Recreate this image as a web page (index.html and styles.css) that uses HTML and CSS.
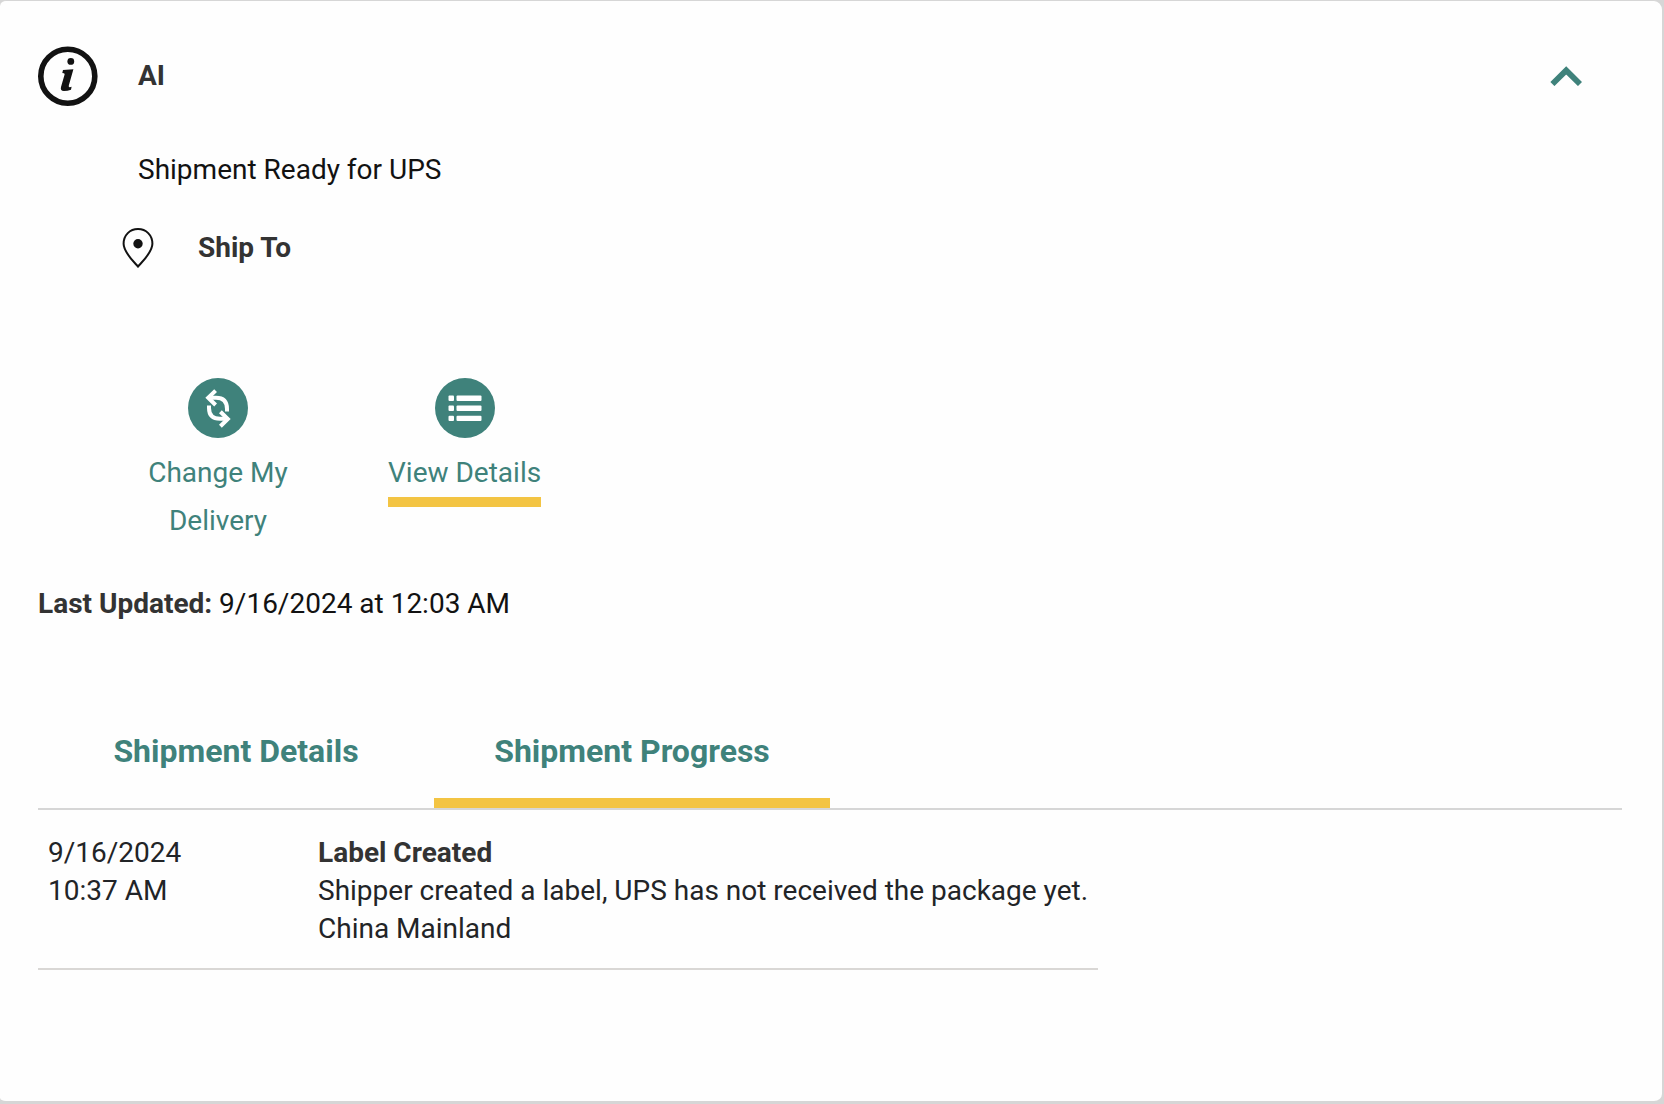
FILE: index.html
```html
<!DOCTYPE html>
<html lang="en">
<head>
    <meta charset="UTF-8">
    <meta name="viewport" content="width=device-width, initial-scale=1.0">
    <title>Shipment Tracking</title>
    <link rel="stylesheet" href="styles.css">
</head>
<body>

<main class="card">
    <header class="card-header">
        <svg class="info-icon" viewBox="0 0 60 60" aria-hidden="true">
            <circle cx="29.8" cy="30.2" r="27" fill="none" stroke="#121212" stroke-width="5.6"/>
            <circle cx="32.8" cy="15.4" r="3.4" fill="#121212"/>
            <path d="M25 24 L35.4 23.2 L30.8 39.6 Q30.4 41.4 31.8 41.2 L33.6 40.8 L33 43.8 Q29.5 45 26 45 Q22 44.8 23 41 L26.6 28.6 Q26.9 27.4 25.8 27.3 L24.3 27.1 Z" fill="#121212"/>
        </svg>
        <h1 class="card-title">AI</h1>
        <button type="button" class="collapse" aria-label="Collapse">
            <svg class="chevron" viewBox="0 0 32 20" aria-hidden="true">
                <path d="M2.4 18 L16.2 4.4 L30 18" fill="none" stroke="#3f827b" stroke-width="5.8"/>
            </svg>
        </button>
    </header>

    <p class="status">Shipment Ready for UPS</p>

    <div class="ship-to">
        <svg class="pin-icon" viewBox="0 0 32 40" aria-hidden="true">
            <path d="M16 38.6 C12 34 1.6 24.5 1.6 15.8 C1.6 7 8 1.1 16 1.1 C24 1.1 30.4 7 30.4 15.8 C30.4 24.5 20 34 16 38.6 Z" fill="none" stroke="#121212" stroke-width="2"/>
            <circle cx="16" cy="15.7" r="4.7" fill="#121212"/>
        </svg>
        <h2 class="ship-to-title">Ship To</h2>
    </div>

    <nav class="actions">
        <a class="action" href="#change">
            <svg class="action-icon" viewBox="0 0 60 60" aria-hidden="true">
                <circle cx="30" cy="30" r="30" fill="#3f827b"/>
                <g fill="none" stroke="#fff" stroke-width="4">
                    <path d="M21 19.8 L28 19.8 Q39 19.8 39 31 L39 33.5"/>
                    <path d="M27.6 12.6 L20.2 19.8 L27.6 27"/>
                    <path d="M39 40.8 L32 40.8 Q21 40.8 21 30 L21 27.5"/>
                    <path d="M32.4 33.8 L39.8 41 L32.4 48.2"/>
                </g>
            </svg>
            <span class="action-label">Change My Delivery</span>
        </a>
        <a class="action active" href="#details">
            <svg class="action-icon" viewBox="0 0 60 60" aria-hidden="true">
                <circle cx="30" cy="30" r="30" fill="#3f827b"/>
                <g fill="#fff">
                    <rect x="13.5" y="17.5" width="5.5" height="5.4" rx="1"/>
                    <rect x="21.5" y="17.5" width="25" height="5.4" rx="1"/>
                    <rect x="13.5" y="27.6" width="5.5" height="5.4" rx="1"/>
                    <rect x="21.5" y="27.6" width="25" height="5.4" rx="1"/>
                    <rect x="13.5" y="37.7" width="5.5" height="5.4" rx="1"/>
                    <rect x="21.5" y="37.7" width="25" height="5.4" rx="1"/>
                </g>
            </svg>
            <span class="action-label">View Details</span>
        </a>
    </nav>

    <p class="updated"><strong>Last Updated:</strong> 9/16/2024 at 12:03 AM</p>

    <div class="tabs" role="tablist">
        <button type="button" class="tab" role="tab" aria-selected="false">Shipment Details</button>
        <button type="button" class="tab active" role="tab" aria-selected="true">Shipment Progress</button>
    </div>

    <table class="progress">
        <tr>
            <td class="when">9/16/2024<br>10:37 AM</td>
            <td><strong>Label Created</strong><br>Shipper created a label, UPS has not received the package yet.<br>China Mainland</td>
        </tr>
    </table>
</main>

</body>
</html>
```
FILE: styles.css
```css
* {
    box-sizing: border-box;
}

body {
    margin: 0;
    background-color: #d6d6d6;
    font-family: Roboto, Arial, sans-serif;
    font-size: 28px;
    line-height: 38px;
    color: #121212;
}

h1, h2, p {
    margin: 0;
    font-size: 28px;
}

strong {
    color: #333;
}

.card {
    min-height: 100vh;
    padding: 45px 40px 120px 38px;
    background-color: #fefefe;
    border: solid #d6d6d6;
    border-width: 1px 2px 3px 0;
    border-radius: 6px 10px 10px 6px;
}

.card-header {
    display: flex;
    align-items: center;
    gap: 40px;
}

.info-icon {
    width: 60px;
    height: 60px;
}

.card-title,
.ship-to-title {
    color: #333;
}

.collapse {
    margin-left: auto;
    margin-right: 40px;
    padding: 0;
    background: none;
    border: none;
    cursor: pointer;
}

.chevron {
    display: block;
    width: 32px;
    height: 20px;
}

.status {
    margin: 45px 0 0 100px;
}

.ship-to {
    display: flex;
    align-items: center;
    gap: 44px;
    margin: 39px 0 0 84px;
}

.pin-icon {
    width: 32px;
    height: 40px;
}

.actions {
    display: flex;
    align-items: flex-start;
    gap: 90px;
    margin: 110px 0 0 100px;
}

.action {
    display: flex;
    flex-direction: column;
    align-items: center;
    gap: 11px;
    max-width: 160px;
    line-height: 48px;
    text-align: center;
    text-decoration: none;
    color: #3f827b;
}

.action-icon {
    width: 60px;
    height: 60px;
}

.action.active .action-label {
    border-bottom: 10px solid #f3c443;
}

.updated {
    margin-top: 40px;
}

.tabs {
    display: flex;
    margin-top: 81px;
    border-bottom: 2px solid #d6d6d6;
}

.tab {
    width: 25%;
    padding: 28px 0;
    background: none;
    border: none;
    border-bottom: 10px solid transparent;
    font: bold 32px/38px Roboto, Arial, sans-serif;
    color: #3f827b;
    cursor: pointer;
}

.tab.active {
    border-bottom-color: #f3c443;
}

.progress {
    border-collapse: collapse;
    border-bottom: 2px solid #d9d7d5;
    color: #222427;
}

.progress td {
    padding: 24px 10px 20px;
    vertical-align: top;
}

.progress .when {
    width: 270px;
}
```
